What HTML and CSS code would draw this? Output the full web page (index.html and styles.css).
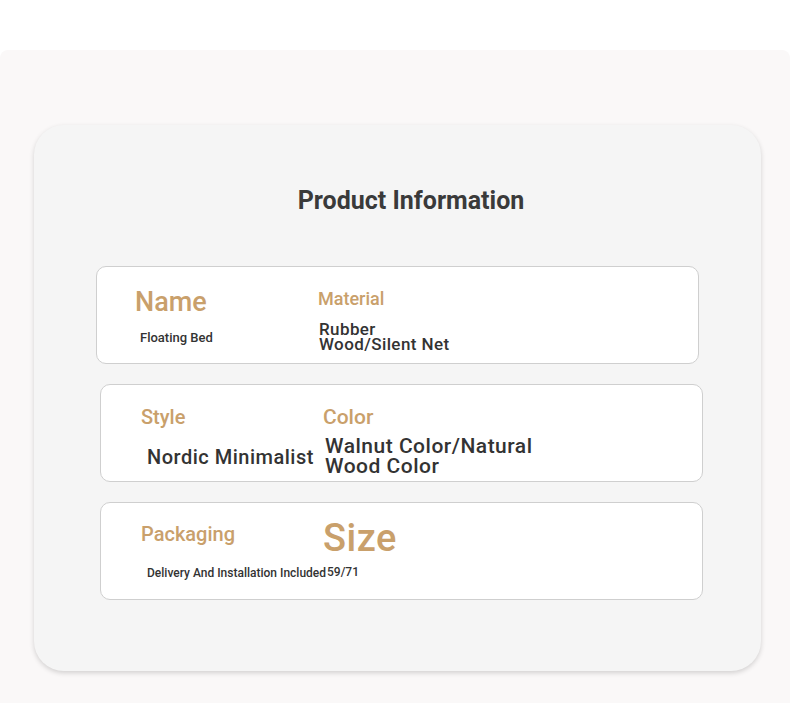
FILE: index.html
```html
<!DOCTYPE html>
<html>
<head>
<meta charset="utf-8">
<link rel="stylesheet" href="styles.css">
</head>
<body>
<div class="page">
  <div class="panel">
    <div class="card">
      <h1 class="title">Product Information</h1>
      <div class="row row1">
        <div class="col">
          <div class="name-label">Name</div>
          <div class="name-value">Floating Bed</div>
        </div>
        <div class="col">
          <div class="mat-label">Material</div>
          <div class="mat-value">Rubber<br>Wood/Silent Net</div>
        </div>
      </div>
      <div class="row row2">
        <div class="col">
          <div class="style-label">Style</div>
          <div class="style-value">Nordic Minimalist</div>
        </div>
        <div class="col">
          <div class="color-label">Color</div>
          <div class="color-value">Walnut Color/Natural<br>Wood Color</div>
        </div>
      </div>
      <div class="row row3">
        <div class="col">
          <div class="pack-label">Packaging</div>
          <div class="pack-value">Delivery And Installation Included</div>
        </div>
        <div class="col">
          <div class="size-label">Size</div>
          <div class="size-value">59/71</div>
        </div>
      </div>
    </div>
  </div>
</div>
</body>
</html>
```

FILE: styles.css
```css
html, body {
  margin: 0;
  padding: 0;
  background: #ffffff;
  font-family: Roboto, "Liberation Sans", sans-serif;
}

.page {
  width: 790px;
  height: 703px;
  padding-top: 50px;
  box-sizing: border-box;
}

.panel {
  height: 653px;
  background: #faf8f8;
  border-radius: 8px 8px 0 0;
  padding-top: 75px;
  padding-left: 34px;
  box-sizing: border-box;
}

.card {
  width: 727px;
  height: 546px;
  background: #f5f5f5;
  border-radius: 30px;
  box-shadow: 0 2px 5px rgba(0, 0, 0, 0.16);
  padding-top: 61px;
  box-sizing: border-box;
}

.title {
  margin: 0 0 50px 0;
  padding-left: 27px;
  text-align: center;
  font-size: 25px;
  line-height: 30px;
  font-weight: 700;
  color: #3a3a3a;
}

.row {
  width: 603px;
  height: 98px;
  box-sizing: border-box;
  background: #ffffff;
  border: 1px solid #cfcfcf;
  border-radius: 10px;
  padding-top: 20px;
  display: grid;
  margin-bottom: 20px;
}

.row1 {
  margin-left: 62px;
  padding-left: 38px;
  grid-template-columns: 183px 1fr;
}

.row2, .row3 {
  margin-left: 66px;
  padding-left: 39px;
  grid-template-columns: 183px 1fr;
}

.col {
  display: flex;
  flex-direction: column;
  align-items: flex-start;
  white-space: nowrap;
}

.name-label, .mat-label, .style-label, .color-label, .pack-label, .size-label {
  color: #c9a06b;
  font-weight: 500;
}

.name-value, .mat-value, .style-value, .color-value, .pack-value, .size-value {
  color: #333333;
  font-weight: 500;
}

.name-label {
  font-size: 27px;
  line-height: 30px;
}
.name-value {
  font-size: 13px;
  line-height: 16px;
  margin-top: 13px;
  margin-left: 5px;
}
.mat-label {
  font-size: 18px;
  line-height: 22px;
  margin-top: 1px;
}
.mat-value {
  font-size: 17px;
  line-height: 15px;
  margin-top: 12px;
  margin-left: 1px;
  letter-spacing: 0.4px;
}

.style-label {
  font-size: 20px;
  line-height: 24px;
  margin-left: 1px;
}
.style-value {
  font-size: 20px;
  line-height: 24px;
  margin-top: 16px;
  margin-left: 7px;
  letter-spacing: 0.5px;
}
.color-label {
  font-size: 21px;
  line-height: 24px;
}
.color-value {
  font-size: 21px;
  line-height: 20px;
  margin-top: 7px;
  margin-left: 2px;
  letter-spacing: 0.5px;
}

.pack-label {
  font-size: 20px;
  line-height: 24px;
  margin-top: -1px;
  margin-left: 1px;
}
.pack-value {
  font-size: 12px;
  line-height: 14px;
  margin-top: 20px;
  margin-left: 7px;
}
.size-label {
  font-size: 38px;
  line-height: 34px;
  margin-top: -2px;
  letter-spacing: 0.5px;
}
.size-value {
  font-size: 12px;
  line-height: 14px;
  margin-top: 10px;
  margin-left: 4px;
}
```
